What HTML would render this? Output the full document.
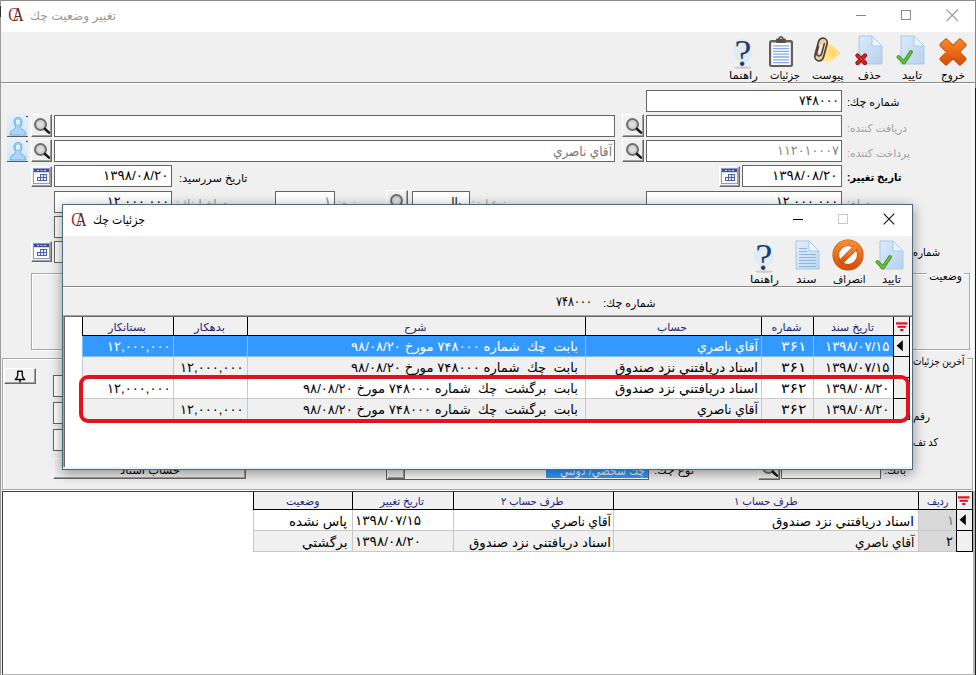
<!DOCTYPE html>
<html lang="fa"><head><meta charset="utf-8"><title>تغيير وضعيت چك</title>
<style>
html,body{margin:0;padding:0}
body{width:976px;height:675px;overflow:hidden;background:#f0f0f0;font-family:"Liberation Sans","DejaVu Sans",sans-serif}
#root{position:relative;width:976px;height:675px;overflow:hidden;background:#f0f0f0}
#root div,#root svg,#root span.t{position:absolute;box-sizing:border-box}
.t{white-space:nowrap;direction:rtl;transform-origin:0 50%;display:block}
.in{background:#fff;border:1px solid #646464}
.btn{background:#f0f0f0;border:1px solid;border-color:#fff #696969 #696969 #fff;box-shadow:inset -1px -1px 0 #a0a0a0}
.ln{background:#a0a0a0}
.hd{background:#f0f0f0;border-left:1px solid #000;border-bottom:1px solid #000;border-right:1px solid #000}

</style></head>
<body>
<div id="root">
<div style="left:0px;top:0px;width:976px;height:32px;background:#fff"></div>
<div style="left:0px;top:0px;width:976px;height:1px;background:#8c8c8c"></div>
<svg style="left:8px;top:8px" width="18" height="16" viewBox="0 0 18 16"><text transform="translate(0.300,12.800) scale(0.860,1)" font-family="Liberation Serif,serif" font-size="18" fill="#b8202c">C</text><text transform="translate(4.600,12.800) scale(0.860,1)" font-family="Liberation Serif,serif" font-size="18" fill="#5c2c2c">A</text></svg>
<span class="t" style="left:30px;top:6.5px;font-size:12px;line-height:19px;color:#999;transform:scaleX(1.0193);">تغيير وضعيت چك</span>
<div style="left:856px;top:15px;width:10px;height:1px;background:#888"></div>
<div style="left:901px;top:10px;width:10px;height:10px;border:1px solid #888"></div>
<svg style="left:946px;top:9px" width="13" height="13" viewBox="0 0 13 13"><path d="M0.500 0.500 L12 12 M12 0.500 L0.500 12" stroke="#999" stroke-width="1.100"/></svg>
<div style="left:0px;top:82px;width:976px;height:1px;background:#8a8a8a"></div>
<div style="left:0px;top:83px;width:976px;height:1px;background:#fff"></div>
<svg style="left:938.2px;top:36.6px" width="30" height="30" viewBox="0 0 30 30"><defs><linearGradient id="gx3" gradientUnits="userSpaceOnUse" x1="0" y1="2" x2="0" y2="28"><stop offset="0" stop-color="#f68a2a"/><stop offset="0.5" stop-color="#ea6a12"/><stop offset="1" stop-color="#cf4f08"/></linearGradient></defs><path d="M21.93 3.12 L26.88 8.07 L19.95 15.00 L26.88 21.93 L21.93 26.88 L15.00 19.95 L8.07 26.88 L3.12 21.93 L10.05 15.00 L3.12 8.07 L8.07 3.12 L15.00 10.05 Z" fill="#c24c0c" stroke="#c24c0c" stroke-width="3.4" stroke-linejoin="round"/><path d="M21.93 3.12 L26.88 8.07 L19.95 15.00 L26.88 21.93 L21.93 26.88 L15.00 19.95 L8.07 26.88 L3.12 21.93 L10.05 15.00 L3.12 8.07 L8.07 3.12 L15.00 10.05 Z" fill="url(#gx3)" stroke="url(#gx3)" stroke-width="1.8" stroke-linejoin="round"/></svg>
<svg style="left:896px;top:35px" width="30" height="32" viewBox="0 0 30 32"><g transform="translate(4,0)"><defs><linearGradient id="gd4" x1="0" y1="0" x2="1" y2="1"><stop offset="0" stop-color="#dbeaf8"/><stop offset="1" stop-color="#b5d2ee"/></linearGradient></defs><path d="M1 1 H14 L24 11 V29 H1 Z" fill="url(#gd4)" stroke="#a9c9e8" stroke-width="1"/><path d="M14 1 V11 H24 Z" fill="#eef5fc" stroke="#a9c9e8" stroke-width="1"/></g><path d="M2.5 22 L8 27.5 L15 17" fill="none" stroke="#3f8f1f" stroke-width="3.8" stroke-linecap="round" stroke-linejoin="round"/><path d="M2.5 22 L8 27.5 L15 17" fill="none" stroke="#6fc23a" stroke-width="1.8" stroke-linecap="round" stroke-linejoin="round"/></svg>
<svg style="left:854px;top:35px" width="30" height="32" viewBox="0 0 30 32"><g transform="translate(4,0)"><defs><linearGradient id="gd5" x1="0" y1="0" x2="1" y2="1"><stop offset="0" stop-color="#dbeaf8"/><stop offset="1" stop-color="#b5d2ee"/></linearGradient></defs><path d="M1 1 H14 L24 11 V29 H1 Z" fill="url(#gd5)" stroke="#a9c9e8" stroke-width="1"/><path d="M14 1 V11 H24 Z" fill="#eef5fc" stroke="#a9c9e8" stroke-width="1"/></g><path d="M3.5 20.5 L11 28 M11 20.5 L3.5 28" fill="none" stroke="#9c1414" stroke-width="4.4" stroke-linecap="round"/><path d="M3.5 20.5 L11 28 M11 20.5 L3.5 28" fill="none" stroke="#d02828" stroke-width="2.4" stroke-linecap="round"/></svg>
<svg style="left:810px;top:35.5px" width="34" height="32" viewBox="0 0 34 32"><defs><radialGradient id="gn6" cx="0.68" cy="0.45" r="0.6"><stop offset="0" stop-color="#ffd561"/><stop offset="0.55" stop-color="#ffe599"/><stop offset="1" stop-color="#fdf3d4" stop-opacity="0.5"/></radialGradient></defs><path d="M3 11 L17 5 L31 17 L16 30 Z" fill="url(#gn6)"/><g transform="translate(11,13.5) rotate(15)"><rect x="-4.4" y="-11.6" width="8.8" height="23.2" rx="4.4" fill="#ead0b2" stroke="#4c4238" stroke-width="1.7"/><path d="M1.7 -6.500 V4.200 a2.500 2.500 0 0 1 -5 0 V-2.500" fill="none" stroke="#4c4238" stroke-width="1.500" stroke-linecap="round"/><path d="M-0.600 -4 V3.500" stroke="#fff" stroke-width="1.300" stroke-linecap="round"/></g></svg>
<svg style="left:768px;top:36px" width="26" height="32" viewBox="0 0 26 32"><rect x="1" y="4" width="24" height="27" rx="2.500" fill="#625f5e"/><rect x="3.200" y="6.500" width="19.600" height="22.500" fill="#fdfdff"/><rect x="8" y="2.500" width="10" height="4.500" rx="1" fill="#55514f"/><rect x="10.500" y="0.300" width="5" height="4" rx="1.800" fill="#55514f"/><circle cx="13" cy="2.300" r="0.900" fill="#d8d8d8"/><g stroke="#86a9ea" stroke-width="1.300"><path d="M5 9.800 H21 M5 12.600 H21 M5 15.400 H21 M5 18.200 H21 M5 21 H21 M5 23.800 H21 M5 26.600 H21"/></g></svg>
<svg style="left:732px;top:38px" width="22" height="32" viewBox="0 0 22 32"><ellipse cx="11" cy="13" rx="10" ry="12" fill="#dcebf7" opacity="0.85"/><text x="0" y="0" transform="translate(11,28.3) scale(1.0,1)" text-anchor="middle" font-family="Liberation Serif,serif" font-size="38" fill="#243d63">?</text><ellipse cx="11" cy="29.600" rx="9" ry="1.300" fill="#c4c4c4" opacity="0.8"/></svg>
<span class="t" style="left:941px;top:66.0px;font-size:11px;line-height:18px;color:#000;transform:scaleX(0.9487);">خروج</span>
<span class="t" style="left:901.5px;top:66.0px;font-size:11px;line-height:18px;color:#000;transform:scaleX(1.0765);">تاييد</span>
<span class="t" style="left:858px;top:66.0px;font-size:11px;line-height:18px;color:#000;transform:scaleX(0.9590);">حذف</span>
<span class="t" style="left:811.5px;top:66.0px;font-size:11px;line-height:18px;color:#000;transform:scaleX(0.9815);">پيوست</span>
<span class="t" style="left:770px;top:66.0px;font-size:11px;line-height:18px;color:#000;transform:scaleX(0.9100);">جزئيات</span>
<span class="t" style="left:729px;top:66.0px;font-size:11px;line-height:18px;color:#000;transform:scaleX(1.0661);">راهنما</span>
<div class="in" style="left:646px;top:90px;width:196px;height:22px;"></div>
<span class="t" style="left:798.5px;top:90.0px;font-size:13.5px;line-height:22px;color:#000;transform:scaleX(0.9192);">۷۴۸۰۰۰</span>
<span class="t" style="left:846.5px;top:93.0px;font-size:11px;line-height:18px;color:#000;transform:scaleX(1.0060);">شماره چك:</span>
<div class="in" style="left:646px;top:115px;width:196px;height:22px;"></div>
<div class="btn" style="left:622px;top:114px;width:22px;height:23px;"></div>
<svg style="left:622.5px;top:114px" width="22" height="22" viewBox="0 0 22 22"><circle cx="9.500" cy="10.500" r="5.500" fill="#cfcfcf" stroke="#6e6e6e" stroke-width="2"/><circle cx="9.500" cy="10.500" r="2.600" fill="#dedede"/><path d="M14 15 L18 18.600" stroke="#1c1c1c" stroke-width="2.600" stroke-linecap="round"/></svg>
<div class="in" style="left:54px;top:115px;width:561px;height:22px;"></div>
<div class="btn" style="left:31px;top:114px;width:21px;height:23px;"></div>
<svg style="left:31.0px;top:114px" width="22" height="22" viewBox="0 0 22 22"><circle cx="9.500" cy="10.500" r="5.500" fill="#cfcfcf" stroke="#6e6e6e" stroke-width="2"/><circle cx="9.500" cy="10.500" r="2.600" fill="#dedede"/><path d="M14 15 L18 18.600" stroke="#1c1c1c" stroke-width="2.600" stroke-linecap="round"/></svg>
<div style="left:7px;top:114px;width:21px;height:23px;background:linear-gradient(#e4f1fd,#cfe5fa);border-bottom:1px solid #5a5a5a"></div>
<svg style="left:7px;top:114px" width="21" height="22" viewBox="0 0 21 22"><g fill="#acd4f6" stroke="#6fb0e8" stroke-width="1"><path d="M3 21 q0.500 -5 5 -6.500 l1 -1.500 q-2 -2 -2 -5 q0 -4.500 4 -4.500 q4 0 4 4.500 q0 3 -2 5 l1 1.500 q4.500 1.500 5 6.500 z"/></g><path d="M8.500 6 q2.500 -2.500 5 0 v5 h-5 z" fill="#e4f1fd" stroke="#6fb0e8" stroke-width="0.700"/><circle cx="20" cy="2.500" r="0.800" fill="#222"/></svg>
<span class="t" style="left:846.5px;top:119.0px;font-size:11px;line-height:18px;color:#a0a0a0;transform:scaleX(0.9643);">دريافت كننده:</span>
<div class="in" style="left:646px;top:140px;width:196px;height:22px;"></div>
<span class="t" style="left:776.5px;top:140.0px;font-size:13.5px;line-height:22px;color:#888;transform:scaleX(0.9500);">۱۱۲۰۱۰۰۰۷</span>
<div class="btn" style="left:622px;top:139px;width:22px;height:23px;"></div>
<svg style="left:622.5px;top:139px" width="22" height="22" viewBox="0 0 22 22"><circle cx="9.500" cy="10.500" r="5.500" fill="#cfcfcf" stroke="#6e6e6e" stroke-width="2"/><circle cx="9.500" cy="10.500" r="2.600" fill="#dedede"/><path d="M14 15 L18 18.600" stroke="#1c1c1c" stroke-width="2.600" stroke-linecap="round"/></svg>
<div class="in" style="left:54px;top:140px;width:561px;height:22px;"></div>
<span class="t" style="left:553px;top:140.5px;font-size:13px;line-height:21px;color:#777;transform:scaleX(0.9284);">آقاي ناصري</span>
<div class="btn" style="left:31px;top:139px;width:21px;height:23px;"></div>
<svg style="left:31.0px;top:139px" width="22" height="22" viewBox="0 0 22 22"><circle cx="9.500" cy="10.500" r="5.500" fill="#cfcfcf" stroke="#6e6e6e" stroke-width="2"/><circle cx="9.500" cy="10.500" r="2.600" fill="#dedede"/><path d="M14 15 L18 18.600" stroke="#1c1c1c" stroke-width="2.600" stroke-linecap="round"/></svg>
<div style="left:7px;top:139px;width:21px;height:23px;background:linear-gradient(#e4f1fd,#cfe5fa);border-bottom:1px solid #5a5a5a"></div>
<svg style="left:7px;top:139px" width="21" height="22" viewBox="0 0 21 22"><g fill="#acd4f6" stroke="#6fb0e8" stroke-width="1"><path d="M3 21 q0.500 -5 5 -6.500 l1 -1.500 q-2 -2 -2 -5 q0 -4.500 4 -4.500 q4 0 4 4.500 q0 3 -2 5 l1 1.500 q4.500 1.500 5 6.500 z"/></g><path d="M8.500 6 q2.500 -2.500 5 0 v5 h-5 z" fill="#e4f1fd" stroke="#6fb0e8" stroke-width="0.700"/><circle cx="20" cy="2.500" r="0.800" fill="#222"/></svg>
<span class="t" style="left:846.5px;top:144.0px;font-size:11px;line-height:18px;color:#a0a0a0;transform:scaleX(0.9810);">پرداخت كننده:</span>
<div class="in" style="left:742px;top:165px;width:100px;height:22px;"></div>
<span class="t" style="left:772px;top:165.0px;font-size:13.5px;line-height:22px;color:#000;">۱۳۹۸/۰۸/۲۰</span>
<div class="btn" style="left:719px;top:166px;width:21px;height:21px;"></div>
<svg style="left:721px;top:168px" width="17" height="16" viewBox="0 0 17 16"><rect x="0.500" y="0.500" width="16" height="15" fill="#fdfdff" stroke="#8e9ac8"/><rect x="1" y="1" width="15" height="3.200" fill="#3f4f9e"/><path d="M4 2.500 h2 M7.500 2.500 h2 M11 2.500 h2" stroke="#c8d0f4" stroke-width="1"/><g fill="#eef1ff" stroke="#4a5db8" stroke-width="1"><rect x="7.500" y="6.500" width="3" height="3"/><rect x="10.500" y="6.500" width="3" height="3"/><rect x="4.500" y="9.500" width="3" height="3"/><rect x="7.500" y="9.500" width="3" height="3"/><rect x="10.500" y="9.500" width="3" height="3"/></g></svg>
<span class="t" style="left:846.5px;top:168.0px;font-size:11px;line-height:18px;color:#000;font-weight:bold;transform:scaleX(0.9152);">تاريخ تغيير:</span>
<div class="in" style="left:54px;top:165px;width:118px;height:22px;"></div>
<span class="t" style="left:103px;top:165.0px;font-size:13.5px;line-height:22px;color:#000;">۱۳۹۸/۰۸/۲۰</span>
<div class="btn" style="left:31px;top:166px;width:21px;height:21px;"></div>
<svg style="left:33px;top:168px" width="17" height="16" viewBox="0 0 17 16"><rect x="0.500" y="0.500" width="16" height="15" fill="#fdfdff" stroke="#8e9ac8"/><rect x="1" y="1" width="15" height="3.200" fill="#3f4f9e"/><path d="M4 2.500 h2 M7.500 2.500 h2 M11 2.500 h2" stroke="#c8d0f4" stroke-width="1"/><g fill="#eef1ff" stroke="#4a5db8" stroke-width="1"><rect x="7.500" y="6.500" width="3" height="3"/><rect x="10.500" y="6.500" width="3" height="3"/><rect x="4.500" y="9.500" width="3" height="3"/><rect x="7.500" y="9.500" width="3" height="3"/><rect x="10.500" y="9.500" width="3" height="3"/></g></svg>
<span class="t" style="left:179px;top:169.0px;font-size:11px;line-height:18px;color:#000;transform:scaleX(1.0236);">تاريخ سررسيد:</span>
<div class="in" style="left:646px;top:191px;width:196px;height:22px;"></div>
<span class="t" style="left:776px;top:191.0px;font-size:13.5px;line-height:22px;color:#000;transform:scaleX(0.9463);">۱۲,۰۰۰,۰۰۰</span>
<span class="t" style="left:846.5px;top:194.0px;font-size:11px;line-height:18px;color:#a0a0a0;transform:scaleX(1.0797);">مبلغ:</span>
<div class="in" style="left:54px;top:191px;width:118px;height:22px;"></div>
<span class="t" style="left:107px;top:191.0px;font-size:13.5px;line-height:22px;color:#000;transform:scaleX(0.9463);">۱۲,۰۰۰,۰۰۰</span>
<span class="t" style="left:176px;top:194.0px;font-size:11px;line-height:18px;color:#a0a0a0;transform:scaleX(1.1945);">مبلغ اينك:</span>
<div class="in" style="left:275px;top:191px;width:60px;height:22px;"></div>
<span class="t" style="left:324px;top:191.0px;font-size:13.5px;line-height:22px;color:#888;transform:scaleX(1.0185);">۱</span>
<span class="t" style="left:338px;top:194.0px;font-size:11px;line-height:18px;color:#a0a0a0;transform:scaleX(0.9328);">نرخ:</span>
<div class="btn" style="left:386px;top:190px;width:22px;height:23px;"></div>
<svg style="left:386.5px;top:190px" width="22" height="22" viewBox="0 0 22 22"><circle cx="9.500" cy="10.500" r="5.500" fill="#cfcfcf" stroke="#6e6e6e" stroke-width="2"/><circle cx="9.500" cy="10.500" r="2.600" fill="#dedede"/><path d="M14 15 L18 18.600" stroke="#1c1c1c" stroke-width="2.600" stroke-linecap="round"/></svg>
<div class="in" style="left:412px;top:191px;width:58px;height:22px;"></div>
<span class="t" style="left:446px;top:191.5px;font-size:13px;line-height:21px;color:#000;transform:scaleX(0.9008);">ريال</span>
<span class="t" style="left:472px;top:194.0px;font-size:11px;line-height:18px;color:#a0a0a0;transform:scaleX(0.9684);">نوع ارز:</span>
<div class="in" style="left:54px;top:216px;width:118px;height:22px;"></div>
<div class="in" style="left:54px;top:241px;width:118px;height:22px;"></div>
<div class="btn" style="left:31px;top:241px;width:21px;height:21px;"></div>
<svg style="left:33px;top:243px" width="17" height="16" viewBox="0 0 17 16"><rect x="0.500" y="0.500" width="16" height="15" fill="#fdfdff" stroke="#8e9ac8"/><rect x="1" y="1" width="15" height="3.200" fill="#3f4f9e"/><path d="M4 2.500 h2 M7.500 2.500 h2 M11 2.500 h2" stroke="#c8d0f4" stroke-width="1"/><g fill="#eef1ff" stroke="#4a5db8" stroke-width="1"><rect x="7.500" y="6.500" width="3" height="3"/><rect x="10.500" y="6.500" width="3" height="3"/><rect x="4.500" y="9.500" width="3" height="3"/><rect x="7.500" y="9.500" width="3" height="3"/><rect x="10.500" y="9.500" width="3" height="3"/></g></svg>
<span class="t" style="left:913px;top:243.0px;font-size:11px;line-height:18px;color:#000;transform:scaleX(0.8995);">شماره</span>
<div style="left:31px;top:273px;width:939px;height:77px;border:1px solid #a8a8a8;border-right-color:#a8a8a8;box-shadow:1px 1px 0 #fff, inset 1px 1px 0 #fff"></div>
<div style="left:927px;top:266px;width:37px;height:14px;background:#f0f0f0"></div>
<span class="t" style="left:929px;top:267.0px;font-size:11px;line-height:18px;color:#000;transform:scaleX(0.9679);">وضعيت</span>
<div style="left:2px;top:358px;width:971px;height:132px;border:1px solid #a8a8a8;box-shadow:1px 1px 0 #fff, inset 1px 1px 0 #fff"></div>
<div style="left:911px;top:351px;width:56px;height:14px;background:#f0f0f0"></div>
<span class="t" style="left:913px;top:352.0px;font-size:11px;line-height:18px;color:#000;transform:scaleX(0.8126);">آخرين جزئيات</span>
<div class="btn" style="left:4px;top:368px;width:32px;height:16px;"></div>
<svg style="left:14px;top:369.5px" width="12" height="14" viewBox="0 0 12 14"><path d="M3.700 1.200 h4.600 v4.300 q0.200 2 2.400 4 h-9.400 q2.200 -2 2.400 -4 z" fill="#f4f4f4" stroke="#111" stroke-width="1.500" stroke-linejoin="round"/><path d="M6 9.800 v2.800" stroke="#111" stroke-width="1.500"/></svg>
<div class="in" style="left:53px;top:375px;width:100px;height:22px;"></div>
<div class="in" style="left:53px;top:402px;width:100px;height:22px;"></div>
<div class="in" style="left:53px;top:429px;width:100px;height:22px;"></div>
<span class="t" style="left:913px;top:407.0px;font-size:11px;line-height:18px;color:#000;transform:scaleX(0.9494);">رقم</span>
<span class="t" style="left:913px;top:433.0px;font-size:11px;line-height:18px;color:#000;transform:scaleX(0.8767);">كد تف</span>
<div class="btn" style="left:53px;top:458px;width:193px;height:21px;"></div>
<span class="t" style="left:120px;top:461.0px;font-size:11px;line-height:18px;color:#000;transform:scaleX(1.0486);">حساب اسناد</span>
<div class="in" style="left:781px;top:458px;width:100px;height:21px;"></div>
<div class="btn" style="left:758px;top:457px;width:22px;height:23px;"></div>
<svg style="left:758.5px;top:457px" width="22" height="22" viewBox="0 0 22 22"><circle cx="9.500" cy="10.500" r="5.500" fill="#cfcfcf" stroke="#6e6e6e" stroke-width="2"/><circle cx="9.500" cy="10.500" r="2.600" fill="#dedede"/><path d="M14 15 L18 18.600" stroke="#1c1c1c" stroke-width="2.600" stroke-linecap="round"/></svg>
<span class="t" style="left:884px;top:461.0px;font-size:11px;line-height:18px;color:#000;transform:scaleX(1.0086);">بانك:</span>
<div class="in" style="left:386px;top:458px;width:263px;height:22px;"></div>
<div class="btn" style="left:387px;top:459px;width:18px;height:20px;"></div>
<div style="left:546px;top:461px;width:102px;height:17px;background:#3399ff"></div>
<span class="t" style="left:560px;top:459.5px;font-size:13px;line-height:21px;color:#e8f2ff;transform:scaleX(0.8332);">چك شخصي/ دولتي</span>
<span class="t" style="left:654px;top:461.0px;font-size:11px;line-height:18px;color:#000;transform:scaleX(1.0667);">نوع چك:</span>
<div style="left:2px;top:491px;width:974px;height:184px;background:#fff;border:1px solid #404040;border-right:none;border-bottom:1px solid #b0b0b0"></div>
<div class="hd" style="left:956px;top:492px;width:17px;height:18px;"></div>
<svg style="left:958.3px;top:496px" width="12" height="10" viewBox="0 0 12 10"><g fill="#e0101c"><rect x="0" y="0.300" width="11.500" height="2.200"/><rect x="1.600" y="3.800" width="8.300" height="2"/><rect x="4.200" y="7" width="3.200" height="2"/></g></svg>
<div class="hd" style="left:918px;top:492px;width:39px;height:18px;"></div>
<span class="t" style="left:927px;top:492.0px;font-size:11px;line-height:18px;color:#1e1e78;transform:scaleX(0.8714);">رديف</span>
<div class="hd" style="left:613px;top:492px;width:306px;height:18px;"></div>
<span class="t" style="left:734px;top:492.0px;font-size:11px;line-height:18px;color:#1e1e78;transform:scaleX(0.9257);">طرف حساب ۱</span>
<div class="hd" style="left:453px;top:492px;width:161px;height:18px;"></div>
<span class="t" style="left:500.5px;top:492.0px;font-size:11px;line-height:18px;color:#1e1e78;transform:scaleX(0.9112);">طرف حساب ۲</span>
<div class="hd" style="left:352px;top:492px;width:102px;height:18px;"></div>
<span class="t" style="left:380px;top:492.0px;font-size:11px;line-height:18px;color:#1e1e78;transform:scaleX(0.9559);">تاريخ تغيير</span>
<div class="hd" style="left:253px;top:492px;width:100px;height:18px;"></div>
<span class="t" style="left:285.5px;top:492.0px;font-size:11px;line-height:18px;color:#1e1e78;transform:scaleX(0.9826);">وضعيت</span>
<div style="left:253px;top:510px;width:99px;height:21px;background:#fff;border-left:1px solid #c8c8c8;border-bottom:1px solid #c8c8c8"></div>
<div style="left:352px;top:510px;width:101px;height:21px;background:#fff;border-left:1px solid #c8c8c8;border-bottom:1px solid #c8c8c8"></div>
<div style="left:453px;top:510px;width:160px;height:21px;background:#fff;border-left:1px solid #c8c8c8;border-bottom:1px solid #c8c8c8"></div>
<div style="left:613px;top:510px;width:305px;height:21px;background:#fff;border-left:1px solid #c8c8c8;border-bottom:1px solid #c8c8c8"></div>
<div style="left:918px;top:510px;width:38px;height:21px;background:#d9d9d9;border-bottom:1px solid #c8c8c8;border-left:1px solid #c8c8c8"></div>
<div style="left:253px;top:531px;width:99px;height:21px;background:#f0f0f0;border-left:1px solid #c8c8c8;border-bottom:1px solid #c8c8c8"></div>
<div style="left:352px;top:531px;width:101px;height:21px;background:#f0f0f0;border-left:1px solid #c8c8c8;border-bottom:1px solid #c8c8c8"></div>
<div style="left:453px;top:531px;width:160px;height:21px;background:#f0f0f0;border-left:1px solid #c8c8c8;border-bottom:1px solid #c8c8c8"></div>
<div style="left:613px;top:531px;width:305px;height:21px;background:#f0f0f0;border-left:1px solid #c8c8c8;border-bottom:1px solid #c8c8c8"></div>
<div style="left:918px;top:531px;width:38px;height:21px;background:#d9d9d9;border-bottom:1px solid #c8c8c8;border-left:1px solid #c8c8c8"></div>
<div style="left:956px;top:510px;width:17px;height:21px;background:#f0f0f0;border:1px solid #000;border-top:none"></div>
<svg style="left:959px;top:514px" width="8" height="12" viewBox="0 0 8 12"><path d="M6.800 0.300 L0.600 5.800 L6.800 11.300 Z" fill="#000"/></svg>
<div style="left:956px;top:531px;width:17px;height:21px;background:#f0f0f0;border:1px solid #000;border-top:none"></div>
<span class="t" style="left:947px;top:510.0px;font-size:13.5px;line-height:22px;color:#7a7a7a;transform:scaleX(1.0185);">۱</span>
<span class="t" style="left:946px;top:531.0px;font-size:13.5px;line-height:22px;color:#000;transform:scaleX(0.9634);">۲</span>
<span class="t" style="left:772px;top:510.5px;font-size:13px;line-height:21px;color:#000;transform:scaleX(1.0268);">اسناد دريافتني نزد صندوق</span>
<span class="t" style="left:854.5px;top:531.5px;font-size:13px;line-height:21px;color:#000;transform:scaleX(0.9363);">آقاي ناصري</span>
<span class="t" style="left:550.5px;top:510.5px;font-size:13px;line-height:21px;color:#000;transform:scaleX(0.9442);">آقاي ناصري</span>
<span class="t" style="left:468.5px;top:531.5px;font-size:13px;line-height:21px;color:#000;transform:scaleX(1.0268);">اسناد دريافتني نزد صندوق</span>
<span class="t" style="left:354.5px;top:510.0px;font-size:13.5px;line-height:22px;color:#000;transform:scaleX(1.0074);">۱۳۹۸/۰۷/۱۵</span>
<span class="t" style="left:354.5px;top:531.0px;font-size:13.5px;line-height:22px;color:#000;transform:scaleX(1.0074);">۱۳۹۸/۰۸/۲۰</span>
<span class="t" style="left:289px;top:510.5px;font-size:13px;line-height:21px;color:#000;transform:scaleX(1.0372);">پاس نشده</span>
<span class="t" style="left:301.5px;top:531.5px;font-size:13px;line-height:21px;color:#000;transform:scaleX(1.0497);">برگشتي</span>
<div style="left:973px;top:491px;width:2px;height:184px;background:#b4b4b4"></div>
<div style="left:975px;top:0px;width:1px;height:88px;background:#7b8794"></div>
<div style="left:975px;top:88px;width:1px;height:587px;background:#1a1a1a"></div>
<div style="left:971px;top:84px;width:3px;height:272px;background:#f8f8f8"></div>
<div style="left:0px;top:0px;width:1px;height:675px;background:#9a9a9a"></div>
<div style="left:0px;top:6px;width:1px;height:11px;background:#333"></div>
<div style="left:62px;top:204px;width:851px;height:266px;background:#f0f0f0;border:1px solid #4f6a7c;box-shadow:inset 0 0 0 1px #e2f5ff, 0 3px 12px 0 rgba(0,0,0,0.42)"></div>
<div style="left:63px;top:205px;width:849px;height:31px;background:#fff"></div>
<svg style="left:70.5px;top:212.5px" width="18" height="16" viewBox="0 0 18 16"><text transform="translate(0.300,12.800) scale(0.860,1)" font-family="Liberation Serif,serif" font-size="18" fill="#b8202c">C</text><text transform="translate(4.600,12.800) scale(0.860,1)" font-family="Liberation Serif,serif" font-size="18" fill="#5c2c2c">A</text></svg>
<span class="t" style="left:93px;top:210.5px;font-size:12px;line-height:19px;color:#000;transform:scaleX(0.9150);">جزئيات چك</span>
<div style="left:793px;top:219px;width:10px;height:1px;background:#000"></div>
<div style="left:838px;top:214px;width:10px;height:10px;border:1px solid #c8c8c8"></div>
<svg style="left:883px;top:213px" width="13" height="13" viewBox="0 0 13 13"><path d="M0.700 0.700 L11.300 11.300 M11.300 0.700 L0.700 11.300" stroke="#111" stroke-width="1.100"/></svg>
<svg style="left:874.5px;top:239.5px" width="30" height="32" viewBox="0 0 30 32"><g transform="translate(4,0)"><defs><linearGradient id="gd25" x1="0" y1="0" x2="1" y2="1"><stop offset="0" stop-color="#dbeaf8"/><stop offset="1" stop-color="#b5d2ee"/></linearGradient></defs><path d="M1 1 H14 L24 11 V29 H1 Z" fill="url(#gd25)" stroke="#a9c9e8" stroke-width="1"/><path d="M14 1 V11 H24 Z" fill="#eef5fc" stroke="#a9c9e8" stroke-width="1"/></g><path d="M2.5 22 L8 27.5 L15 17" fill="none" stroke="#3f8f1f" stroke-width="3.8" stroke-linecap="round" stroke-linejoin="round"/><path d="M2.5 22 L8 27.5 L15 17" fill="none" stroke="#6fc23a" stroke-width="1.8" stroke-linecap="round" stroke-linejoin="round"/></svg>
<svg style="left:832.3px;top:238.5px" width="32" height="32" viewBox="0 0 32 32"><defs><linearGradient id="gc26" x1="0" y1="0" x2="0" y2="1"><stop offset="0" stop-color="#f68c30"/><stop offset="1" stop-color="#d4520a"/></linearGradient></defs><circle cx="16" cy="16" r="12.300" fill="#fafafa" stroke="#c4500c" stroke-width="6.600"/><circle cx="16" cy="16" r="12.300" fill="none" stroke="url(#gc26)" stroke-width="5.400"/><path d="M8.300 23.700 L23.700 8.300" stroke="#c4500c" stroke-width="5.400"/><path d="M8.300 23.700 L23.700 8.300" stroke="url(#gc26)" stroke-width="4.200"/></svg>
<svg style="left:795px;top:240px" width="26" height="32" viewBox="0 0 26 32"><defs><linearGradient id="gd27" x1="0" y1="0" x2="1" y2="1"><stop offset="0" stop-color="#e2eefa"/><stop offset="1" stop-color="#bcd7f0"/></linearGradient></defs><path d="M1 1 H14 L24 11 V29 H1 Z" fill="url(#gd27)" stroke="#a9c9e8" stroke-width="1"/><path d="M14 1 V11 H24 Z" fill="#eef5fc" stroke="#a9c9e8" stroke-width="1"/><g stroke="#8fb6e2" stroke-width="1"><path d="M4 8.5 H12 M4 11.5 H12 M4 14.5 H21 M4 17.5 H21 M4 20.5 H21 M4 23.5 H21 M4 26.5 H21"/></g></svg>
<svg style="left:753px;top:242px" width="22" height="32" viewBox="0 0 22 32"><ellipse cx="11" cy="13" rx="10" ry="12" fill="#dcebf7" opacity="0.85"/><text x="0" y="0" transform="translate(11,28.3) scale(1.0,1)" text-anchor="middle" font-family="Liberation Serif,serif" font-size="38" fill="#243d63">?</text><ellipse cx="11" cy="29.600" rx="9" ry="1.300" fill="#c4c4c4" opacity="0.8"/></svg>
<span class="t" style="left:881.5px;top:270.0px;font-size:11px;line-height:18px;color:#000;transform:scaleX(1.0227);">تاييد</span>
<span class="t" style="left:832.5px;top:270.0px;font-size:11px;line-height:18px;color:#000;transform:scaleX(0.8981);">انصراف</span>
<span class="t" style="left:795.5px;top:270.0px;font-size:11px;line-height:18px;color:#000;transform:scaleX(1.1195);">سند</span>
<span class="t" style="left:750px;top:270.0px;font-size:11px;line-height:18px;color:#000;transform:scaleX(1.0661);">راهنما</span>
<div style="left:63px;top:286px;width:849px;height:1px;background:#8a8a8a"></div>
<div style="left:63px;top:287px;width:849px;height:1px;background:#fff"></div>
<span class="t" style="left:603px;top:293.5px;font-size:11px;line-height:18px;color:#000;transform:scaleX(1.0060);">شماره چك:</span>
<span class="t" style="left:555.5px;top:291.0px;font-size:13.5px;line-height:22px;color:#000;transform:scaleX(0.8273);">۷۴۸۰۰۰</span>
<div style="left:63px;top:315px;width:849px;height:152px;background:#fff;border:1px solid #a0a0a0;border-bottom:none;border-right:none;box-shadow:inset 1px 1px 0 #696969"></div>
<div class="hd" style="left:893px;top:317px;width:17px;height:19px;"></div>
<svg style="left:895.5px;top:322px" width="12" height="10" viewBox="0 0 12 10"><g fill="#e0101c"><rect x="0" y="0.300" width="11.500" height="2.200"/><rect x="1.600" y="3.800" width="8.300" height="2"/><rect x="4.200" y="7" width="3.200" height="2"/></g></svg>
<div class="hd" style="left:813px;top:317px;width:81px;height:19px;"></div>
<span class="t" style="left:831px;top:317.5px;font-size:11px;line-height:18px;color:#1e1e78;transform:scaleX(0.9939);">تاريخ سند</span>
<div class="hd" style="left:761px;top:317px;width:53px;height:19px;"></div>
<span class="t" style="left:771.5px;top:317.5px;font-size:11px;line-height:18px;color:#1e1e78;">شماره</span>
<div class="hd" style="left:585px;top:317px;width:177px;height:19px;"></div>
<span class="t" style="left:656.5px;top:317.5px;font-size:11px;line-height:18px;color:#1e1e78;transform:scaleX(0.9892);">حساب</span>
<div class="hd" style="left:247px;top:317px;width:339px;height:19px;"></div>
<span class="t" style="left:403.5px;top:317.5px;font-size:11px;line-height:18px;color:#1e1e78;transform:scaleX(1.0049);">شرح</span>
<div class="hd" style="left:173px;top:317px;width:75px;height:19px;"></div>
<span class="t" style="left:194px;top:317.5px;font-size:11px;line-height:18px;color:#1e1e78;transform:scaleX(1.0553);">بدهكار</span>
<div class="hd" style="left:82px;top:317px;width:92px;height:19px;"></div>
<span class="t" style="left:108px;top:317.5px;font-size:11px;line-height:18px;color:#1e1e78;transform:scaleX(1.0171);">بستانكار</span>
<div style="left:82px;top:336px;width:91px;height:21px;background:#3399ff;border-left:1px solid #7fbfff;border-bottom:1px solid #7fbfff"></div>
<div style="left:173px;top:336px;width:74px;height:21px;background:#3399ff;border-left:1px solid #7fbfff;border-bottom:1px solid #7fbfff"></div>
<div style="left:247px;top:336px;width:338px;height:21px;background:#3399ff;border-left:1px solid #7fbfff;border-bottom:1px solid #7fbfff"></div>
<div style="left:585px;top:336px;width:176px;height:21px;background:#3399ff;border-left:1px solid #7fbfff;border-bottom:1px solid #7fbfff"></div>
<div style="left:761px;top:336px;width:52px;height:21px;background:#3399ff;border-left:1px solid #7fbfff;border-bottom:1px solid #7fbfff"></div>
<div style="left:813px;top:336px;width:80px;height:21px;background:#3399ff;border-left:1px solid #7fbfff;border-bottom:1px solid #7fbfff"></div>
<div style="left:893px;top:336px;width:17px;height:21px;background:#f0f0f0;border:1px solid #000;border-top:none"></div>
<svg style="left:896px;top:340px" width="8" height="12" viewBox="0 0 8 12"><path d="M6.800 0.300 L0.600 5.800 L6.800 11.300 Z" fill="#000"/></svg>
<span class="t" style="left:107px;top:335.5px;font-size:13.5px;line-height:22px;color:#fff;transform:scaleX(0.9692);">۱۲,۰۰۰,۰۰۰</span>
<span class="t" style="left:350.5px;top:336.0px;font-size:13px;line-height:21px;color:#fff;transform:scaleX(1.0175);white-space:pre;">بابت  چك  شماره ۷۴۸۰۰۰ مورخ ۹۸/۰۸/۲۰</span>
<span class="t" style="left:696.5px;top:336.0px;font-size:13px;line-height:21px;color:#fff;transform:scaleX(0.9599);">آقاي ناصري</span>
<span class="t" style="left:781px;top:335.5px;font-size:13.5px;line-height:22px;color:#fff;transform:scaleX(1.1716);">۳۶۱</span>
<span class="t" style="left:825px;top:335.5px;font-size:13.5px;line-height:22px;color:#fff;transform:scaleX(0.9845);">۱۳۹۸/۰۷/۱۵</span>
<div style="left:82px;top:357px;width:91px;height:21px;background:#f0f0f0;border-left:1px solid #c8c8c8;border-bottom:1px solid #c8c8c8"></div>
<div style="left:173px;top:357px;width:74px;height:21px;background:#f0f0f0;border-left:1px solid #c8c8c8;border-bottom:1px solid #c8c8c8"></div>
<div style="left:247px;top:357px;width:338px;height:21px;background:#f0f0f0;border-left:1px solid #c8c8c8;border-bottom:1px solid #c8c8c8"></div>
<div style="left:585px;top:357px;width:176px;height:21px;background:#f0f0f0;border-left:1px solid #c8c8c8;border-bottom:1px solid #c8c8c8"></div>
<div style="left:761px;top:357px;width:52px;height:21px;background:#f0f0f0;border-left:1px solid #c8c8c8;border-bottom:1px solid #c8c8c8"></div>
<div style="left:813px;top:357px;width:80px;height:21px;background:#f0f0f0;border-left:1px solid #c8c8c8;border-bottom:1px solid #c8c8c8"></div>
<div style="left:893px;top:357px;width:17px;height:21px;background:#f0f0f0;border:1px solid #000;border-top:none"></div>
<span class="t" style="left:180px;top:356.5px;font-size:13.5px;line-height:22px;color:#000;transform:scaleX(0.9692);">۱۲,۰۰۰,۰۰۰</span>
<span class="t" style="left:350.5px;top:357.0px;font-size:13px;line-height:21px;color:#000;transform:scaleX(1.0175);white-space:pre;">بابت  چك  شماره ۷۴۸۰۰۰ مورخ ۹۸/۰۸/۲۰</span>
<span class="t" style="left:614.5px;top:357.0px;font-size:13px;line-height:21px;color:#000;transform:scaleX(1.0340);">اسناد دريافتني نزد صندوق</span>
<span class="t" style="left:781px;top:356.5px;font-size:13.5px;line-height:22px;color:#000;transform:scaleX(1.1716);">۳۶۱</span>
<span class="t" style="left:825px;top:356.5px;font-size:13.5px;line-height:22px;color:#000;transform:scaleX(0.9845);">۱۳۹۸/۰۷/۱۵</span>
<div style="left:82px;top:378px;width:91px;height:21px;background:#fff;border-left:1px solid #c8c8c8;border-bottom:1px solid #c8c8c8"></div>
<div style="left:173px;top:378px;width:74px;height:21px;background:#fff;border-left:1px solid #c8c8c8;border-bottom:1px solid #c8c8c8"></div>
<div style="left:247px;top:378px;width:338px;height:21px;background:#fff;border-left:1px solid #c8c8c8;border-bottom:1px solid #c8c8c8"></div>
<div style="left:585px;top:378px;width:176px;height:21px;background:#fff;border-left:1px solid #c8c8c8;border-bottom:1px solid #c8c8c8"></div>
<div style="left:761px;top:378px;width:52px;height:21px;background:#fff;border-left:1px solid #c8c8c8;border-bottom:1px solid #c8c8c8"></div>
<div style="left:813px;top:378px;width:80px;height:21px;background:#fff;border-left:1px solid #c8c8c8;border-bottom:1px solid #c8c8c8"></div>
<div style="left:893px;top:378px;width:17px;height:21px;background:#f0f0f0;border:1px solid #000;border-top:none"></div>
<span class="t" style="left:107px;top:377.5px;font-size:13.5px;line-height:22px;color:#000;transform:scaleX(0.9692);">۱۲,۰۰۰,۰۰۰</span>
<span class="t" style="left:302.5px;top:378.0px;font-size:13px;line-height:21px;color:#000;transform:scaleX(1.0123);white-space:pre;">بابت  برگشت  چك  شماره ۷۴۸۰۰۰ مورخ ۹۸/۰۸/۲۰</span>
<span class="t" style="left:614.5px;top:378.0px;font-size:13px;line-height:21px;color:#000;transform:scaleX(1.0340);">اسناد دريافتني نزد صندوق</span>
<span class="t" style="left:781px;top:377.5px;font-size:13.5px;line-height:22px;color:#000;transform:scaleX(1.1716);">۳۶۲</span>
<span class="t" style="left:825px;top:377.5px;font-size:13.5px;line-height:22px;color:#000;transform:scaleX(0.9845);">۱۳۹۸/۰۸/۲۰</span>
<div style="left:82px;top:399px;width:91px;height:21px;background:#f0f0f0;border-left:1px solid #c8c8c8;border-bottom:1px solid #c8c8c8"></div>
<div style="left:173px;top:399px;width:74px;height:21px;background:#f0f0f0;border-left:1px solid #c8c8c8;border-bottom:1px solid #c8c8c8"></div>
<div style="left:247px;top:399px;width:338px;height:21px;background:#f0f0f0;border-left:1px solid #c8c8c8;border-bottom:1px solid #c8c8c8"></div>
<div style="left:585px;top:399px;width:176px;height:21px;background:#f0f0f0;border-left:1px solid #c8c8c8;border-bottom:1px solid #c8c8c8"></div>
<div style="left:761px;top:399px;width:52px;height:21px;background:#f0f0f0;border-left:1px solid #c8c8c8;border-bottom:1px solid #c8c8c8"></div>
<div style="left:813px;top:399px;width:80px;height:21px;background:#f0f0f0;border-left:1px solid #c8c8c8;border-bottom:1px solid #c8c8c8"></div>
<div style="left:893px;top:399px;width:17px;height:21px;background:#f0f0f0;border:1px solid #000;border-top:none"></div>
<span class="t" style="left:180px;top:398.5px;font-size:13.5px;line-height:22px;color:#000;transform:scaleX(0.9692);">۱۲,۰۰۰,۰۰۰</span>
<span class="t" style="left:302.5px;top:399.0px;font-size:13px;line-height:21px;color:#000;transform:scaleX(1.0123);white-space:pre;">بابت  برگشت  چك  شماره ۷۴۸۰۰۰ مورخ ۹۸/۰۸/۲۰</span>
<span class="t" style="left:696.5px;top:399.0px;font-size:13px;line-height:21px;color:#000;transform:scaleX(0.9599);">آقاي ناصري</span>
<span class="t" style="left:781px;top:398.5px;font-size:13.5px;line-height:22px;color:#000;transform:scaleX(1.1716);">۳۶۲</span>
<span class="t" style="left:825px;top:398.5px;font-size:13.5px;line-height:22px;color:#000;transform:scaleX(0.9845);">۱۳۹۸/۰۸/۲۰</span>
<div style="left:79px;top:375px;width:831px;height:48px;border:4px solid #e0141c;border-radius:9px"></div>
</div>
</body></html>
